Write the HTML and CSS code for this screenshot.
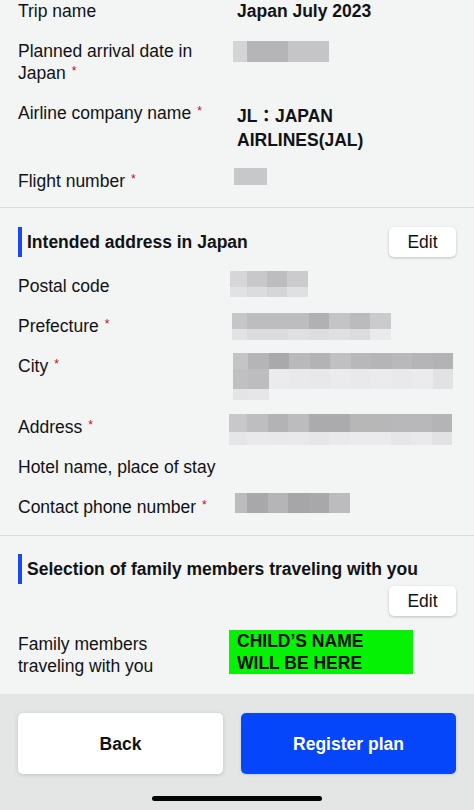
FILE: index.html
```html
<!DOCTYPE html>
<html lang="en">
<head>
<meta charset="utf-8">
<title>Trip plan confirmation</title>
<link rel="stylesheet" href="styles.css">
</head>
<body>
<div class="page">
  <section class="sec sec-trip">
    <div class="row">
      <div class="lab">Trip name</div>
      <div class="val"><span class="txt">Japan July 2023</span></div>
    </div>
    <div class="row">
      <div class="lab">Planned arrival date in <span class="nw">Japan<span class="req">*</span></span></div>
      <div class="val">
        <div class="px ml4 mt1">
          <span class="pr h21"><i class="c w14 gd4"></i><i class="c w41 gb5"></i><i class="c w41 gc5"></i></span>
        </div>
      </div>
    </div>
    <div class="row">
      <div class="lab">Airline company name<span class="req">*</span></div>
      <div class="val"><span class="txt two">JL：JAPAN AIRLINES(JAL)</span></div>
    </div>
    <div class="row">
      <div class="lab">Flight number<span class="req">*</span></div>
      <div class="val">
        <div class="px ml5 mtm2">
          <span class="pr h17"><i class="c w33 gc8"></i></span>
        </div>
      </div>
    </div>
  </section>

  <section class="sec sec-addr">
    <div class="head">
      <h2 class="title">Intended address in Japan</h2>
      <button class="edit" type="button">Edit</button>
    </div>
    <div class="row">
      <div class="lab">Postal code</div>
      <div class="val">
        <div class="px ml1 mtm4">
          <span class="pr h16"><i class="c w17 gd6"></i><i class="c w20 gc8"></i><i class="c w20 gbd"></i><i class="c w21 gcb"></i></span>
          <span class="pr h10"><i class="c w17 ge2"></i><i class="c w20 gdc"></i><i class="c w20 gd6"></i><i class="c w21 ge0"></i></span>
        </div>
      </div>
    </div>
    <div class="row">
      <div class="lab">Prefecture<span class="req">*</span></div>
      <div class="val">
        <div class="px ml3 mtm2">
          <span class="pr h16"><i class="c w15 gc6"></i><i class="c gbd"></i><i class="c gbd"></i><i class="c gbd"></i><i class="c gb0"></i><i class="c gc4"></i><i class="c gbb"></i><i class="c gcb"></i></span>
          <span class="pr h11"><i class="c w15 ge2"></i><i class="c gdc"></i><i class="c gdc"></i><i class="c ge0"></i><i class="c gde"></i><i class="c ge0"></i><i class="c gdc"></i><i class="c gea"></i></span>
        </div>
      </div>
    </div>
    <div class="row">
      <div class="lab">City<span class="req">*</span></div>
      <div class="val tall">
        <div class="px ml4 mtm2">
          <span class="pr h16"><i class="c w15 gc4"></i><i class="c gb5"></i><i class="c ga9"></i><i class="c gb9"></i><i class="c gb3"></i><i class="c gc0"></i><i class="c gb8"></i><i class="c gb5"></i><i class="c gb9"></i><i class="c gb5"></i><i class="c gb3"></i></span>
          <span class="pr h20"><i class="c w15 gc0"></i><i class="c gbd"></i><i class="c geb"></i><i class="c ge9"></i><i class="c ge8"></i><i class="c geb"></i><i class="c ge9"></i><i class="c geb"></i><i class="c ge9"></i><i class="c geb"></i><i class="c ge2"></i></span>
          <span class="pr h11"><i class="c w15 ge4"></i><i class="c ge6"></i></span>
        </div>
      </div>
    </div>
    <div class="row">
      <div class="lab">Address<span class="req">*</span></div>
      <div class="val">
        <div class="px mtm2">
          <span class="pr h18"><i class="c w18 gc8"></i><i class="c gbe"></i><i class="c gb3"></i><i class="c gbc"></i><i class="c gab"></i><i class="c gab"></i><i class="c gb7"></i><i class="c gb7"></i><i class="c gb8"></i><i class="c gb8"></i><i class="c gb4"></i></span>
          <span class="pr h13"><i class="c w18 ge6"></i><i class="c ge9"></i><i class="c ge8"></i><i class="c ge9"></i><i class="c ge6"></i><i class="c ge9"></i><i class="c geb"></i><i class="c geb"></i><i class="c ge6"></i><i class="c ge9"></i><i class="c ge2"></i></span>
        </div>
      </div>
    </div>
    <div class="row">
      <div class="lab">Hotel name, place of stay</div>
      <div class="val"></div>
    </div>
    <div class="row">
      <div class="lab">Contact phone number<span class="req">*</span></div>
      <div class="val">
        <div class="px ml6 mtm3">
          <span class="pr h20"><i class="c w12 gbc"></i><i class="c ga8"></i><i class="c gb5"></i><i class="c ga6"></i><i class="c ga8"></i><i class="c gbc"></i></span>
        </div>
      </div>
    </div>
  </section>

  <section class="sec sec-family">
    <div class="head">
      <h2 class="title">Selection of family members traveling with you</h2>
    </div>
    <div class="edit-row">
      <button class="edit" type="button">Edit</button>
    </div>
    <div class="row family">
      <div class="lab">Family members<br>traveling with you</div>
      <div class="val">
        <div class="child">CHILD’S NAME<br>WILL BE HERE</div>
      </div>
    </div>
  </section>

  <footer class="foot">
    <div class="actions">
      <button class="btn back" type="button">Back</button>
      <button class="btn primary" type="button">Register plan</button>
    </div>
    <div class="home"></div>
  </footer>
</div>
</body>
</html>
```

FILE: styles.css
```css
* { box-sizing: border-box; }

html, body {
  margin: 0;
  padding: 0;
}

body {
  background: #f3f4f4;
  color: #111214;
  font-family: "Liberation Sans", Arial, "Noto Sans CJK JP", sans-serif;
  font-size: 17.5px;
  line-height: 22px;
  width: 474px;
}

.page {
  display: flex;
  flex-direction: column;
  min-height: 100vh;
}

.sec {
  display: flex;
  flex-direction: column;
  padding: 0 18px;
  border-bottom: 1px solid #d9dada;
}

.sec-trip {
  gap: 18px;
  padding-bottom: 15px;
}

.sec-addr {
  gap: 18px;
  padding-top: 19px;
  padding-bottom: 17px;
}

.sec-family {
  padding-top: 18px;
  padding-bottom: 17px;
  border-bottom: none;
}

.row {
  display: flex;
  align-items: flex-start;
}

.lab {
  flex: 0 0 211px;
  width: 211px;
}

.nw {
  display: inline-block;
  white-space: nowrap;
}

.req {
  display: inline-block;
  color: #d0021b;
  font-size: 12px;
  line-height: 12px;
  margin-left: 6px;
  vertical-align: 4px;
}

.val {
  flex: 1 1 auto;
  min-height: 22px;
  height: 22px;
}

.val.tall {
  height: 43px;
}

.txt {
  display: block;
  padding-left: 8px;
  font-weight: 700;
}

.txt.two {
  line-height: 24px;
  margin-top: 2px;
  width: 150px;
}

.row:has(.two) .val {
  height: 50px;
}

/* pixelated (masked) values */
.px {
  display: flex;
  flex-direction: column;
  width: max-content;
}

.pr {
  display: flex;
}

.c {
  display: block;
  width: 20.5px;
  flex: none;
}

.w12 { width: 12px; }
.w14 { width: 14px; }
.w15 { width: 15px; }
.w17 { width: 17px; }
.w18 { width: 18px; }
.w20 { width: 20px; }
.w21 { width: 21px; }
.w33 { width: 33px; }
.w41 { width: 41px; }

.h10 { height: 10px; }
.h11 { height: 11px; }
.h13 { height: 13px; }
.h16 { height: 16px; }
.h17 { height: 17px; }
.h18 { height: 18px; }
.h20 { height: 20px; }
.h21 { height: 21px; }

.ml1 { margin-left: 1px; }
.ml3 { margin-left: 3px; }
.ml4 { margin-left: 4px; }
.ml5 { margin-left: 5px; }
.ml6 { margin-left: 6px; }

.mt1 { margin-top: 1px; }
.mtm2 { margin-top: -2px; }
.mtm3 { margin-top: -3px; }
.mtm4 { margin-top: -4px; }

.ga6 { background: #a6a6a8; }
.ga8 { background: #a8a8aa; }
.ga9 { background: #a9a9ab; }
.gab { background: #ababad; }
.gb0 { background: #b1b1b4; }
.gb3 { background: #b3b3b5; }
.gb4 { background: #b4b4b6; }
.gb5 { background: #b5b5b8; }
.gb7 { background: #b7b7b8; }
.gb8 { background: #b8b8ba; }
.gb9 { background: #b9b9bb; }
.gbb { background: #bbbbbe; }
.gbc { background: #bcbcbe; }
.gbd { background: #bdbdbf; }
.gbe { background: #bebec0; }
.gc0 { background: #c0c0c2; }
.gc4 { background: #c4c4c6; }
.gc5 { background: #c5c5c8; }
.gc6 { background: #c6c6c8; }
.gc8 { background: #c8c8ca; }
.gcb { background: #cbcbcd; }
.gd4 { background: #d4d4d6; }
.gd6 { background: #d6d6d8; }
.gdc { background: #dcdcde; }
.gde { background: #dedee0; }
.ge0 { background: #e0e0e2; }
.ge2 { background: #e2e2e4; }
.ge4 { background: #e4e4e6; }
.ge6 { background: #e6e6e8; }
.ge8 { background: #e8e8ea; }
.ge9 { background: #e9e9eb; }
.gea { background: #eaeaec; }
.geb { background: #ebebed; }

/* section headings */
.head {
  display: flex;
  align-items: center;
  justify-content: space-between;
  height: 30px;
}

.title {
  margin: 0;
  font-size: 17.5px;
  font-weight: 700;
  line-height: 30px;
  border-left: 4px solid #1a48f2;
  padding-left: 5px;
  white-space: nowrap;
}

.edit {
  width: 67px;
  height: 30px;
  padding: 0;
  border: none;
  border-radius: 5px;
  background: #ffffff;
  box-shadow: 0 1px 3px rgba(0, 0, 0, 0.22);
  font-family: inherit;
  font-size: 17.5px;
  color: #111214;
  line-height: 30px;
}

.edit-row {
  display: flex;
  justify-content: flex-end;
  margin-top: 2px;
}

.family {
  margin-top: 17px;
}

.family .val {
  height: 44px;
}

.child {
  margin-top: -3px;
  width: 184px;
  height: 44px;
  background: #05f205;
  padding-left: 8px;
  font-weight: 700;
  line-height: 22px;
  color: #0b0b0b;
}

/* footer */
.foot {
  flex: 1 1 auto;
  background: #e4e5e5;
  padding: 19px 18px 0;
  display: flex;
  flex-direction: column;
}

.actions {
  display: flex;
  gap: 18px;
}

.btn {
  height: 61px;
  border: none;
  border-radius: 5px;
  font-family: inherit;
  font-size: 17.5px;
  font-weight: 700;
  padding: 2px 0 0;
}

.back {
  flex: 0 0 205px;
  background: #ffffff;
  color: #111214;
  box-shadow: 0 1px 4px rgba(0, 0, 0, 0.16);
}

.primary {
  flex: 1 1 auto;
  background: #0646fa;
  color: #ffffff;
  box-shadow: 0 1px 3px rgba(0, 0, 0, 0.12);
}

.home {
  align-self: center;
  width: 170px;
  height: 5px;
  border-radius: 3px;
  background: #050505;
  margin-top: 22px;
}
```
